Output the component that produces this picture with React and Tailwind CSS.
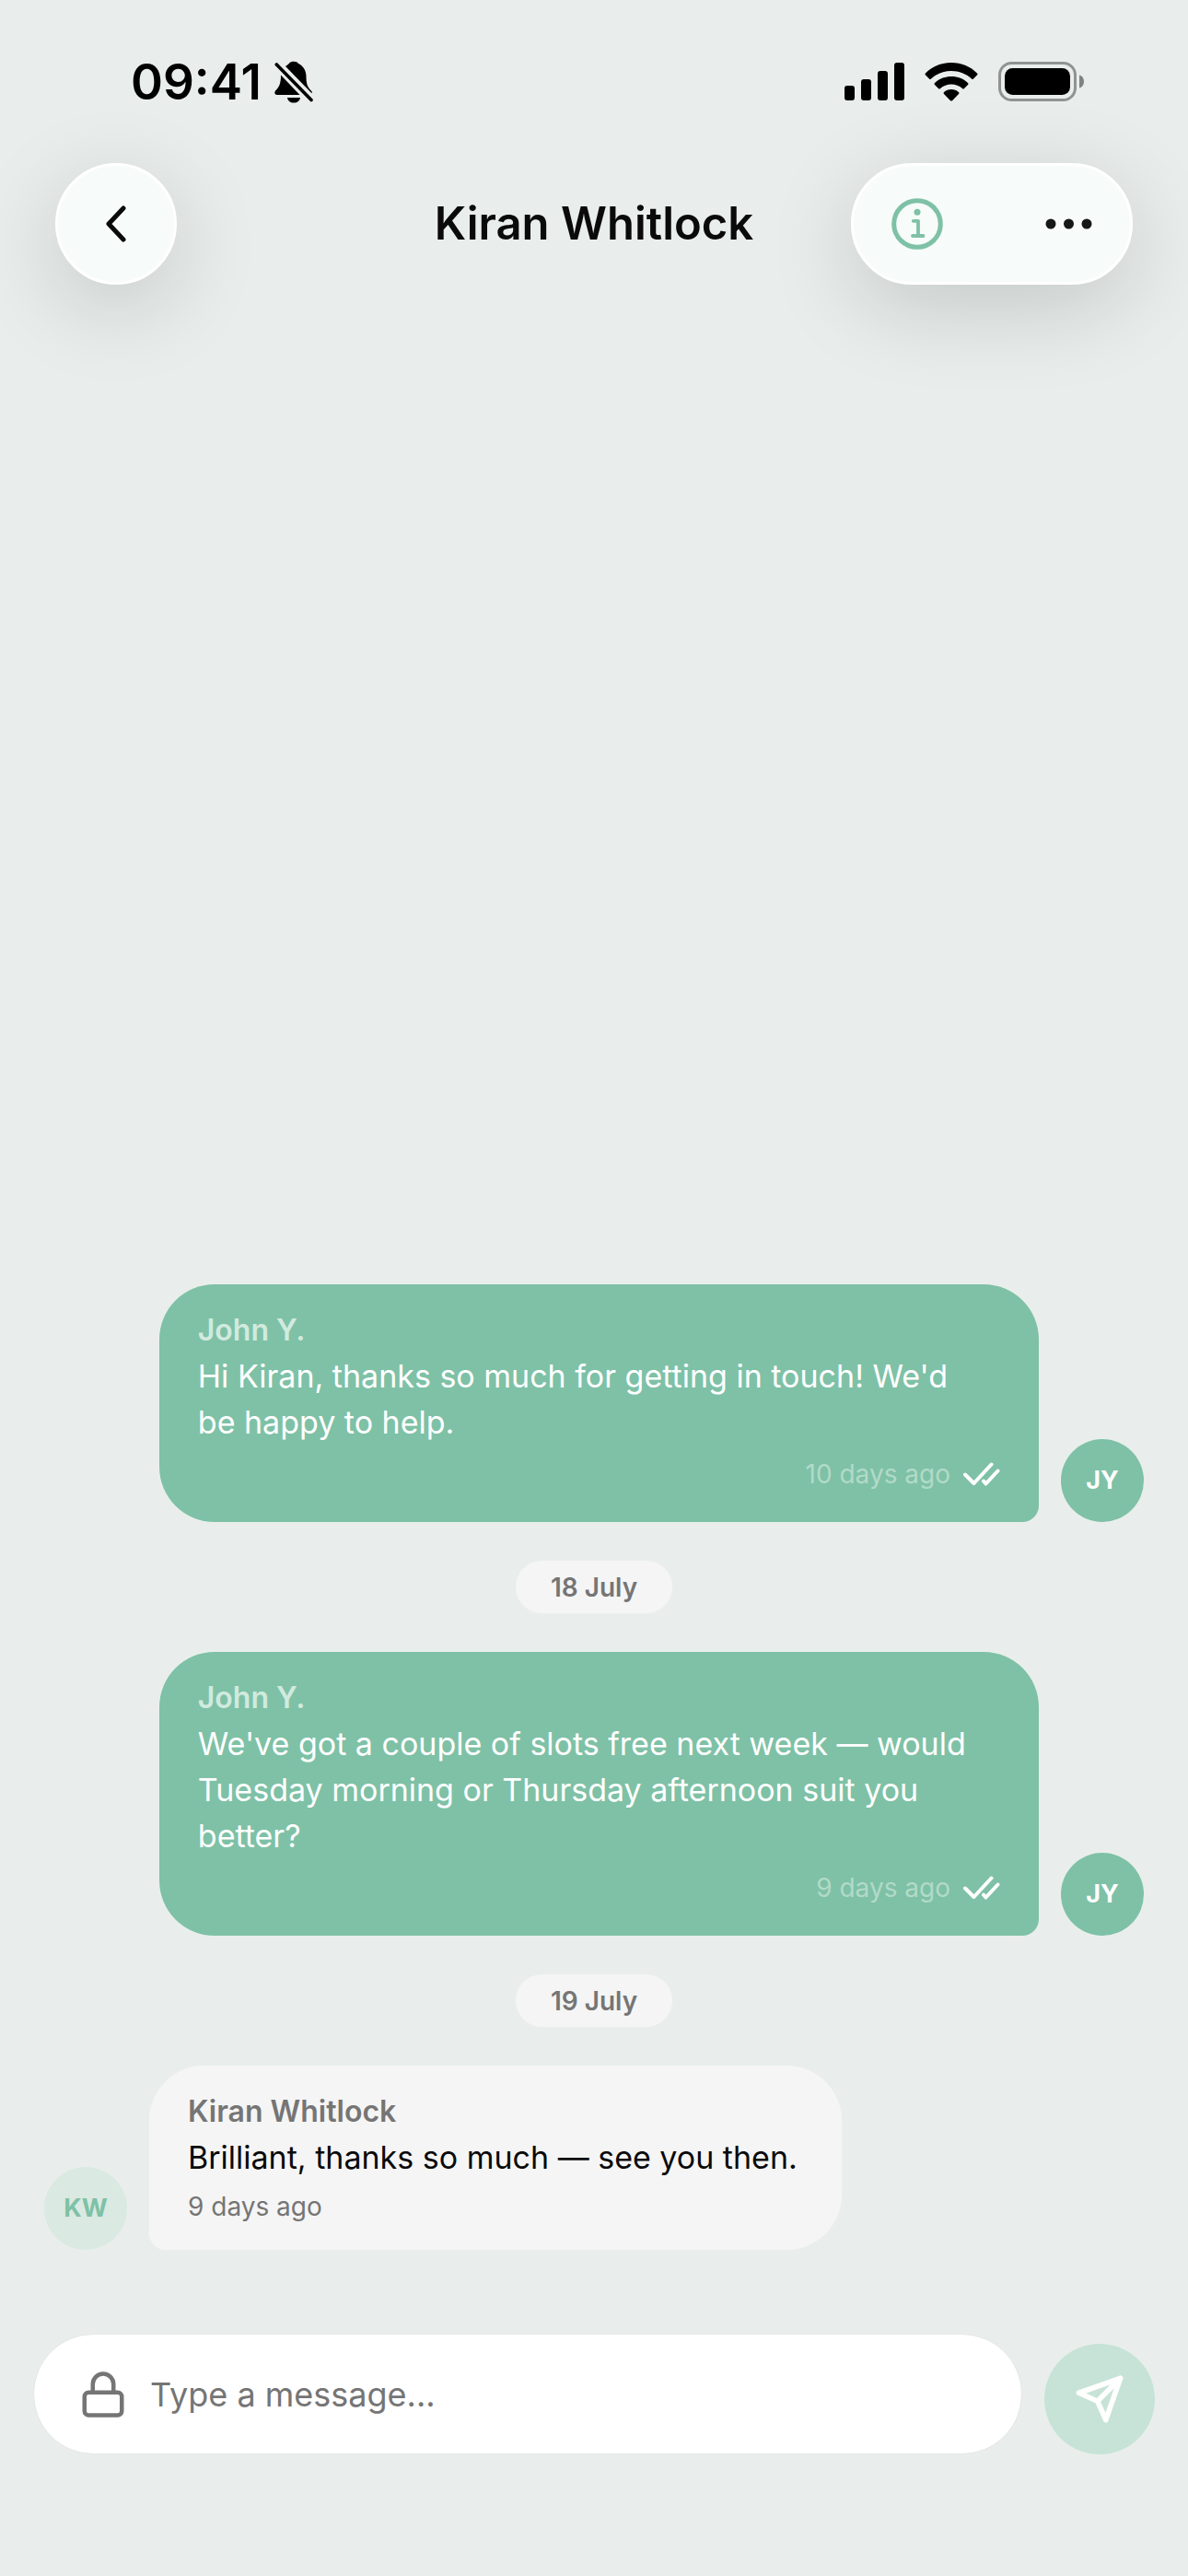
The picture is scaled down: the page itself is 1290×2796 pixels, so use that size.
import React, { useState } from 'react';
import { FiLock, FiSend } from 'react-icons/fi';

const messages = [
  {
    id: 1,
    mine: true,
    name: 'John Y.',
    initials: 'JY',
    text: "Hi Kiran, thanks so much for getting in touch! We'd be happy to help.",
    time: '10 days ago',
  },
  { id: 2, date: '18 July' },
  {
    id: 3,
    mine: true,
    name: 'John Y.',
    initials: 'JY',
    text: "We've got a couple of slots free next week — would Tuesday morning or Thursday afternoon suit you better?",
    time: '9 days ago',
  },
  { id: 4, date: '19 July' },
  {
    id: 5,
    mine: false,
    name: 'Kiran Whitlock',
    initials: 'KW',
    text: 'Brilliant, thanks so much — see you then.',
    time: '9 days ago',
  },
];

function BellOff() {
  return (
    <svg className="w-[42px] h-[46px]" viewBox="0 0 42 46" fill="none">
      <path
        fill="#000"
        d="M12 6C14 4.500 15 4 16 2.800C18 .2 24.500 .2 26 3C31.500 5.500 34.500 11 34.500 17C34.500 25 36 28.500 39.500 32C41 33.500 41 35 40.500 35.300Z"
      />
      <path fill="#000" d="M7 15.500L27.500 37H3C0 37 -.5 34 1.500 32C5 28.500 7 25 7 15.500Z" />
      <path fill="#000" d="M14 40H28C27.500 43.500 25 45.500 21 45.500S14.500 43.500 14 40Z" />
      <path stroke="#000" strokeWidth="3.600" strokeLinecap="round" d="M2.300 4L40 42.500" />
    </svg>
  );
}

function Signal() {
  return (
    <svg className="w-[65px] h-[42px]" viewBox="0 0 65 42">
      <rect x="0" y="25" width="11" height="16" rx="3" />
      <rect x="18" y="18" width="11" height="23" rx="3" />
      <rect x="36" y="9" width="11" height="32" rx="3" />
      <rect x="54" y="0" width="11" height="41" rx="3" />
    </svg>
  );
}

function Wifi() {
  return (
    <svg className="w-[58px] h-[42px]" viewBox="0 0 58 42">
      <path d="M29 0C40 0 50 4.200 57 11.500Q58 12.500 57 13.500L53 17.500Q52 18.500 51 17.500C45 12 37.500 9 29 9S13 12 7 17.500Q6 18.500 5 17.500L1 13.500Q0 12.500 1 11.500C8 4.200 18 0 29 0Z" />
      <path d="M29 15C36 15 42.500 17.500 47 22Q48 23 47 24L43 28Q42 29 41 28C37.500 25 33.500 23.500 29 23.500S20.500 25 17 28Q16 29 15 28L11 24Q10 23 11 22C15.500 17.500 22 15 29 15Z" />
      <path d="M29 29C32 29 35 30 37 32Q38 33 37 34L30 41.200Q29 42 28 41.200L21 34Q20 33 21 32C23 30 26 29 29 29Z" />
    </svg>
  );
}

function Battery() {
  return (
    <svg className="w-[94px] h-[43px]" viewBox="0 0 94 43">
      <rect x="1.500" y="1.500" width="82" height="40" rx="13" fill="none" stroke="#8f9391" strokeWidth="3" />
      <rect x="7" y="7" width="71" height="29" rx="8.500" />
      <path d="M88 14.500C91.500 15.500 93 18.500 93 21.500S91.500 27.500 88 28.500Z" fill="#7f8381" />
    </svg>
  );
}

function InfoIcon() {
  return (
    <svg className="w-[56px] h-[56px]" viewBox="0 0 56 56" fill="none" stroke="#7ec1a6" strokeLinecap="round" strokeLinejoin="round">
      <circle cx="28" cy="28" r="25.300" strokeWidth="5" />
      <circle cx="28" cy="15.200" r="3.500" fill="#7ec1a6" stroke="none" />
      <path d="M23.800 24.800H29V41M23 41H34.500" strokeWidth="3.800" />
    </svg>
  );
}

function DoubleTick() {
  return (
    <svg className="w-[40px] h-[30px]" viewBox="0 0 40 30" fill="none" stroke="#fff" strokeWidth="4" strokeLinecap="round" strokeLinejoin="round">
      <path d="M2 15.500L11.500 25L30.500 4.500" />
      <path d="M22 22.500L24.500 25.500L37.500 11.500" />
    </svg>
  );
}

function Avatar({ initials, mine }) {
  return (
    <div
      className={`w-[90px] h-[90px] shrink-0 rounded-full flex items-center justify-center text-[27px] font-bold ${
        mine ? 'bg-[#7ec1a6] text-white' : 'bg-[#dae9e2] text-[#7ec1a6]'
      }`}
    >
      {initials}
    </div>
  );
}

function Message({ message }) {
  const { mine, name, initials, text, time } = message;

  if (mine) {
    return (
      <div className="flex items-end justify-end gap-6">
        <div className="max-w-[80%] bg-[#7ec1a6] rounded-[60px] rounded-br-[18px] px-[42px] pt-[25px] pb-8">
          <p className="text-[32px] leading-[50px] font-semibold text-[#d1eadf]">{name}</p>
          <p className="text-[34px] leading-[50px] text-white pr-5">{text}</p>
          <div className="flex items-center justify-end gap-[14px] pt-[11px]">
            <span className="text-[28px] leading-[40px] text-[#b2dac9]">{time}</span>
            <DoubleTick />
          </div>
        </div>
        <Avatar initials={initials} mine />
      </div>
    );
  }

  return (
    <div className="flex items-end gap-6">
      <Avatar initials={initials} />
      <div className="max-w-[80%] bg-[#f5f5f5] rounded-[60px] rounded-bl-[18px] pl-[42px] pr-12 pt-[25px] pb-[27px]">
        <p className="text-[32px] leading-[50px] font-semibold text-[#757575]">{name}</p>
        <p className="text-[34px] leading-[50px] text-[#0a0a0a]">{text}</p>
        <p className="text-[28px] leading-[40px] text-[#757575] pt-2">{time}</p>
      </div>
    </div>
  );
}

function App() {
  const [draft, setDraft] = useState('');

  return (
    <div className="min-h-screen bg-[#e9eeec] font-['Inter',sans-serif] flex flex-col">
      {/* Status bar */}
      <div className="h-[177px] pl-[142px] pr-[112px] flex items-center justify-between">
        <div className="flex items-center gap-[14px]">
          <span className="text-[53px] leading-[60px] font-semibold">09:41</span>
          <BellOff />
        </div>
        <div className="flex items-center gap-[22px]">
          <Signal />
          <Wifi />
          <Battery />
        </div>
      </div>

      {/* Header */}
      <header className="px-[60px] grid grid-cols-[306px_1fr_306px] items-center">
        <button
          type="button"
          aria-label="Back"
          className="w-[132px] h-[132px] rounded-full bg-[#f7fbf9] border-[3px] border-white shadow-[0_24px_96px_rgba(0,0,0,0.16)] flex items-center justify-center"
        >
          <svg className="w-[24px] h-[40px]" viewBox="0 0 24 40" fill="none" stroke="#0a0a0a" strokeWidth="5" strokeLinecap="round" strokeLinejoin="round">
            <path d="M20 3L4 20L20 37" />
          </svg>
        </button>
        <h1 className="text-center text-[49px] leading-[60px] font-semibold text-[#0a0a0a]">Kiran Whitlock</h1>
        <div className="h-[132px] rounded-full bg-[#f7fbf9] border-[3px] border-white shadow-[0_24px_96px_rgba(0,0,0,0.16)] flex items-center justify-between px-[41px]">
          <button type="button" aria-label="Conversation info">
            <InfoIcon />
          </button>
          <button type="button" aria-label="More options">
            <svg className="w-[52px] h-[12px]" viewBox="0 0 52 12" fill="#151817">
              <circle cx="7" cy="6" r="5.500" />
              <circle cx="26.500" cy="6" r="5.500" />
              <circle cx="46" cy="6" r="5.500" />
            </svg>
          </button>
        </div>
      </header>

      {/* Conversation */}
      <main className="flex-1 flex flex-col justify-end gap-[42px] px-12 pb-[91px]">
        {messages.map((m) =>
          m.date ? (
            <div key={m.id} className="self-center h-[57px] px-[38px] rounded-full bg-[#f5f5f5] flex items-center text-[28px] font-semibold text-[#757575]">
              {m.date}
            </div>
          ) : (
            <Message key={m.id} message={m} />
          )
        )}
      </main>

      {/* Composer */}
      <form className="flex items-end gap-6 px-9 pb-[132px]" onSubmit={(e) => e.preventDefault()}>
        <label className="flex-1 h-[131px] rounded-full bg-white border border-[#e3e6e4] flex items-center gap-6 px-12">
          <FiLock size={54} className="text-[#757575] shrink-0" />
          <input
            type="text"
            aria-label="Message"
            value={draft}
            onChange={(e) => setDraft(e.target.value)}
            placeholder="Type a message..."
            className="flex-1 min-w-0 text-[36px] bg-transparent outline-none text-[#0a0a0a] placeholder:text-[#757575]"
          />
        </label>
        <button
          type="submit"
          aria-label="Send"
          className="w-[120px] h-[120px] rounded-full bg-[#c7e3d7] text-white flex items-center justify-center"
        >
          <FiSend size={54} className="stroke-[2.5]" />
        </button>
      </form>
    </div>
  );
}

export default App;
